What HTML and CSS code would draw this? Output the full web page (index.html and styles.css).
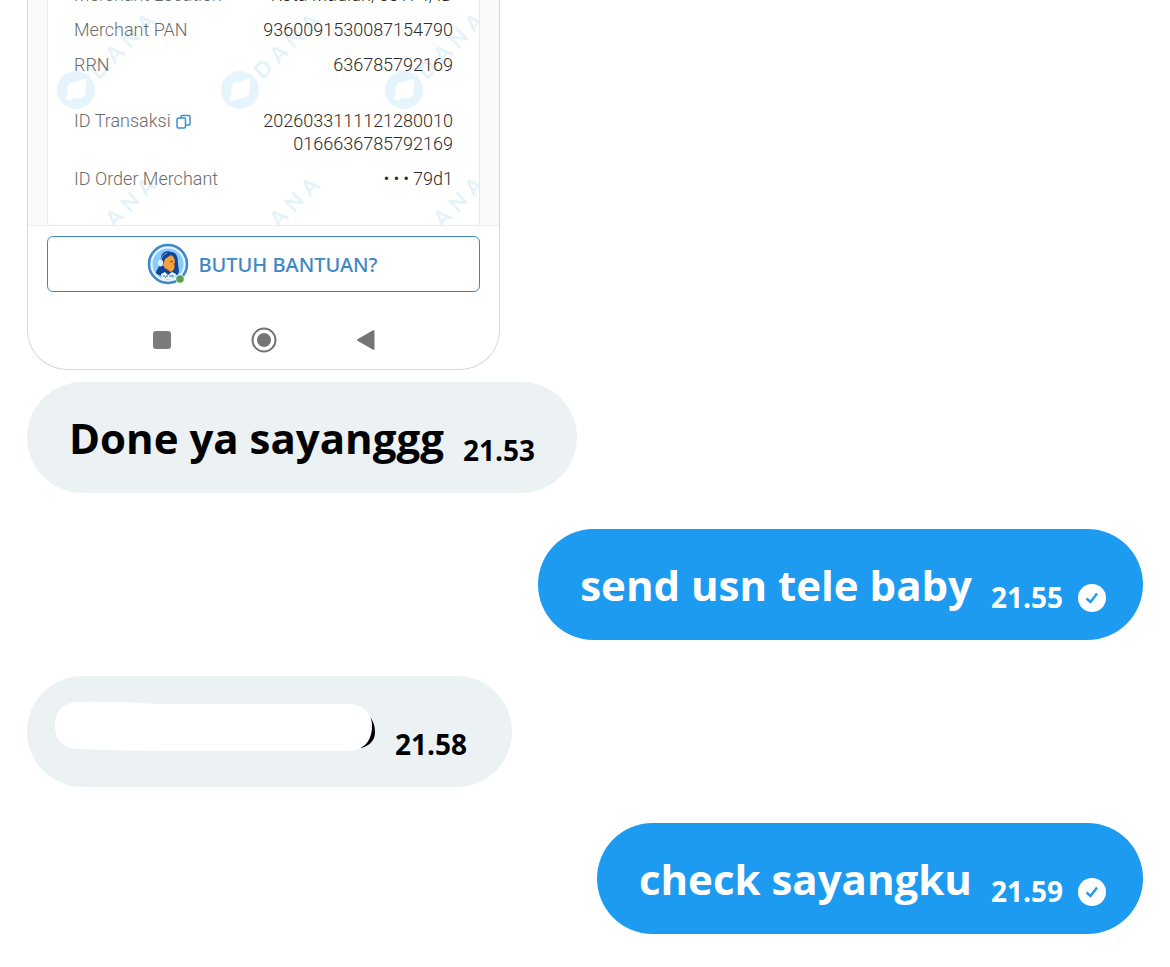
FILE: index.html
```html
<!DOCTYPE html>
<html lang="id">
<head>
<meta charset="utf-8">
<meta name="viewport" content="width=device-width, initial-scale=1">
<title>Chat</title>
<link rel="stylesheet" href="styles.css">
</head>
<body>
<main class="chat">
  <article class="receipt">
    <div class="receipt-scroll">
      <div class="paper">
        <svg class="watermark" aria-hidden="true">
          <defs>
            <pattern id="mark" width="164" height="164" patternUnits="userSpaceOnUse">
              <circle cx="28" cy="90" r="19" fill="#e6f4fd"/>
              <path d="M17 100C20 97 19 91 20 86C22 80 27 84 31 81C33 79 35 79 39 79C37 83 38 89 37 94C34 100 29 97 25 99C22 101 20 101 17 100Z" fill="#fff"/>
              <text class="mark-text" x="0 22 44 66" y="8" transform="translate(51 69) rotate(-45)">DANA</text>
            </pattern>
          </defs>
          <rect width="100%" height="100%" fill="url(#mark)"/>
        </svg>
        <dl class="details">
          <div class="row"><dt>Merchant Location</dt><dd>Kota Madiun, 63174, ID</dd></div>
          <div class="row"><dt>Merchant PAN</dt><dd>9360091530087154790</dd></div>
          <div class="row"><dt>RRN</dt><dd>636785792169</dd></div>
          <div class="row row-group">
            <dt>ID Transaksi
              <button class="copy" type="button" aria-label="Salin">
                <svg width="15" height="15" viewBox="0 0 15 15" fill="none" stroke="#3f8fcf" stroke-width="1.500" stroke-linejoin="round"><path d="M5 4V2.500Q5 1.500 6 1.500H13Q14 1.500 14 2.500V10Q14 11 13 11H10"/><rect x="1" y="4" width="8.500" height="10" rx="1.500"/></svg>
              </button>
            </dt>
            <dd>2026033111121280010<br>0166636785792169</dd>
          </div>
          <div class="row"><dt>ID Order Merchant</dt><dd class="masked"><span>•</span><span>•</span><span>•</span><span>79d1</span></dd></div>
        </dl>
      </div>
    </div>
    <div class="help-bar">
      <button class="help" type="button">
        <svg width="42" height="42" viewBox="0 0 42 42" aria-hidden="true">
          <circle cx="21" cy="21" r="19" fill="#e2f6ff" stroke="#3d88c7" stroke-width="2.600"/>
          <circle cx="21" cy="21" r="15.500" fill="#8acaff"/>
          <path d="M14 15C14 9 20 7 24 9C30 9 31 15 31 20C31 25 33 28 31 31C28 34 14 34 10 31C7 29 11 27 12 23C13 20 13 18 14 15Z" fill="#104595"/>
          <path d="M18 16L24 12Q28 14 28 20Q28 27 24 29Q18 27 16 22Z" fill="#f3a23c"/>
          <path d="M23 19L26 18M27 20L28 23M19 26L22 28" stroke="#8a4c29" stroke-width="1.200" fill="none"/>
          <path d="M14 31L18 29L21 32L25 29L29 31L28 36H15Z" fill="#e9f7ff"/>
          <path d="M16 33H28M18 35L20 32M24 32L26 35" stroke="#3777b7" stroke-dasharray="2 1"/>
          <path d="M14 19Q14 12 20 10" stroke="#78bdf3" fill="none"/>
          <ellipse cx="13.500" cy="20" rx="2.600" ry="3.500" fill="#d8edff"/>
          <circle cx="33" cy="36" r="4.500" fill="#fff"/>
          <circle cx="33" cy="36" r="3.800" fill="#52a353"/>
        </svg>
        <span>BUTUH BANTUAN?</span>
      </button>
    </div>
    <div class="system-nav" aria-hidden="true">
      <svg width="26" height="26" viewBox="0 0 26 26"><rect x="4" y="4" width="18" height="18" rx="3" fill="#7b7b7b"/></svg>
      <svg width="26" height="26" viewBox="0 0 26 26"><circle cx="13" cy="13" r="11.500" fill="none" stroke="#757575" stroke-width="2"/><circle cx="13" cy="13" r="7" fill="#757575"/></svg>
      <svg width="26" height="26" viewBox="0 0 26 26"><path d="M5 13L20.500 4V22Z" fill="#757575" stroke="#757575" stroke-width="2" stroke-linejoin="round"/></svg>
    </div>
  </article>

  <div class="bubble received first">
    <p>Done ya sayanggg</p><time>21.53</time>
  </div>
  <div class="bubble sent">
    <p>send usn tele baby</p><time>21.55</time>
    <svg class="tick" viewBox="0 0 28 28" role="img" aria-label="Terkirim"><circle cx="14" cy="14" r="14" fill="#fff"/><path d="M8.500 14.500L12.500 18L19 9.500" fill="none" stroke="#1d9bf0" stroke-width="2.400"/></svg>
  </div>
  <div class="bubble received hidden-name">
    <svg class="scribble" viewBox="0 0 321 50" role="img" aria-label="Pesan disamarkan"><path d="M305 8Q320 16 320 31Q320 43 306 47Z" fill="#000"/><path d="M24 1Q62 0 100 3H293C309 3 317 13 317 25C317 42 307 50 291 50H105Q65 50 24 48C8 48 0 39 0 24C0 10 9 1 24 1Z" fill="#fff"/></svg>
    <time>21.58</time>
  </div>
  <div class="bubble sent">
    <p>check sayangku</p><time>21.59</time>
    <svg class="tick" viewBox="0 0 28 28" role="img" aria-label="Terkirim"><circle cx="14" cy="14" r="14" fill="#fff"/><path d="M8.500 14.500L12.500 18L19 9.500" fill="none" stroke="#1d9bf0" stroke-width="2.400"/></svg>
  </div>
</main>
</body>
</html>
```

FILE: styles.css
```css
* { box-sizing: border-box; }
body { margin: 0; background: #fff; font-family: "Open Sans", sans-serif; }
.chat { display: flex; flex-direction: column; align-items: flex-start; gap: 36px; padding: 0 27px 32px; }

.receipt { width: 100%; max-width: 473px; border: 1px solid #d6d6de; border-top: 0; border-radius: 0 0 40px 40px; overflow: hidden; }
.receipt-scroll { padding: 0 19px; background: #fafafa; border-bottom: 1px solid #ececec; }
.paper { position: relative; overflow: hidden; background: #fff; border: solid #e8e8ea; border-width: 0 1px; padding: 0 26px 35px; }
.watermark { position: absolute; inset: 0; width: 100%; height: 100%; }
.mark-text { font: 700 22px Lato, sans-serif; text-anchor: middle; fill: #e4f2f9; }
.details { position: relative; display: flex; flex-direction: column; gap: 12px; margin: -17px 0 0; font: 300 18px/23px Roboto, sans-serif; }
.row { display: flex; justify-content: space-between; }
.row-group { margin-top: 21px; }
.row dt { display: flex; align-items: center; align-self: flex-start; gap: 5px; color: #6c6c6c; }
.row dd { margin: 0; color: #2c2c2c; text-align: right; }
.row .masked { display: flex; gap: 4px; }
.copy { display: flex; padding: 2px 0 0; border: 0; background: none; }

.help-bar { padding: 10px 19px 0; }
.help { display: flex; align-items: center; justify-content: center; gap: 9px; width: 100%; height: 56px; padding: 0 2px 0 0; border: 1px solid #3f87c4; border-radius: 6px; background: #fff; color: #3f87c4; font: 500 20px "Noto Sans", sans-serif; }
.system-nav { display: flex; justify-content: center; gap: 76px; padding: 35px 0 16px; }
.system-nav svg { display: block; }

.bubble { display: flex; align-items: flex-end; min-height: 111px; padding: 27px 42px; border-radius: 56px; font-weight: 700; }
.bubble p { margin: 0; font-size: 42px; line-height: 57px; }
.bubble time { margin-left: 19px; font-size: 28px; line-height: 32px; }
.received { background: #ecf2f3; color: #000; }
.sent { align-self: flex-end; padding-right: 37px; background: #1d9bf0; color: #fff; }
.first { margin-top: -24px; }
.tick { width: 28px; height: 28px; margin-bottom: 1px; margin-left: 15px; }
.hidden-name { align-items: flex-start; padding: 25px 45px 27px 28px; }
.hidden-name time { align-self: flex-end; }
.scribble { width: 321px; height: 50px; }
```
